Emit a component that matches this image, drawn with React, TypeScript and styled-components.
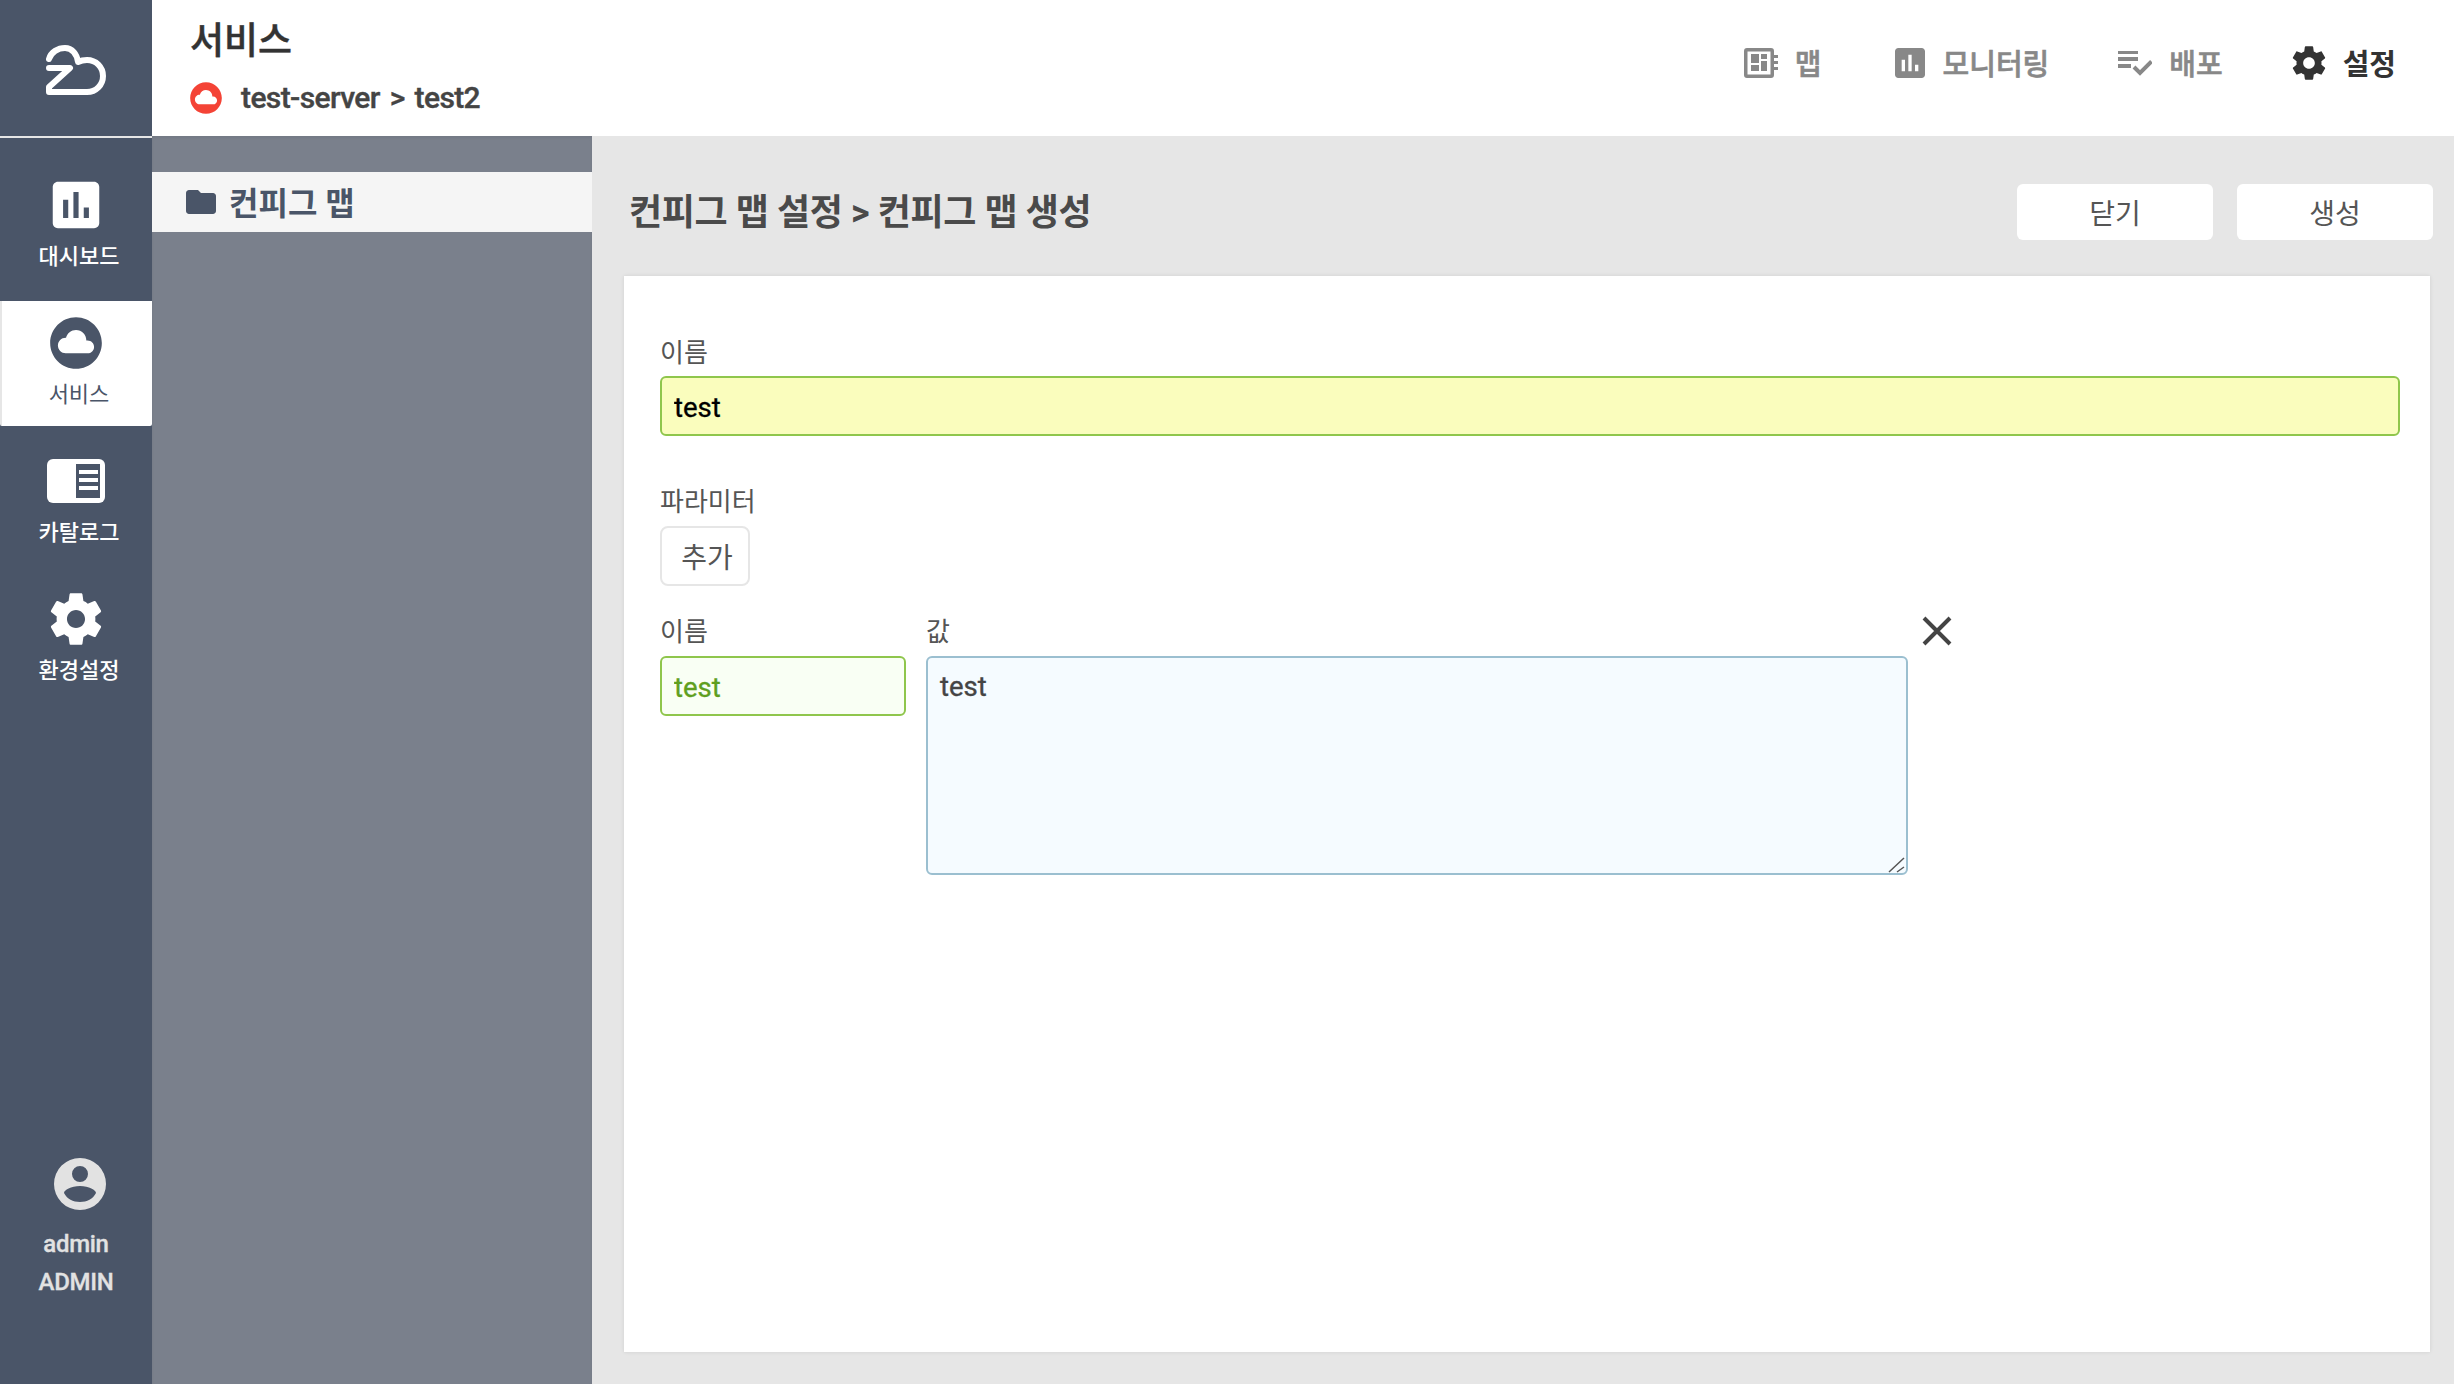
import React from 'react';
import styled, { createGlobalStyle } from 'styled-components';

const Global = createGlobalStyle`
  html, body { margin: 0; padding: 0; height: 100%; overflow: hidden; }
  body { font-family: Roboto, "Noto Sans CJK KR", sans-serif; }
  #root { height: 100%; }
  * { box-sizing: border-box; }
`;

const Shell = styled.div`display: flex; width: 2454px; height: 1384px; background: #e6e6e6;`;
const Sidebar = styled.nav`width: 152px; flex: none; background: #4a5568; display: flex; flex-direction: column;`;
const LogoBox = styled.div`height: 138px; flex: none; border-bottom: 2px solid #e6e6e6; display: flex; align-items: center; justify-content: center; padding-top: 3px;`;
const SideItem = styled.div<{ $active?: boolean; $h: number; $pt: number }>`
  height: ${p => p.$h}px; padding-top: ${p => p.$pt}px; flex: none; display: flex; flex-direction: column; align-items: center;
  font-size: 22px; line-height: 30px; gap: 11px;
  font-weight: ${p => (p.$active ? 400 : 500)};
  color: ${p => (p.$active ? '#4a5568' : '#fff')};
  background: ${p => (p.$active ? '#fff' : 'transparent')};
  ${p => p.$active ? 'margin-top: 3px; border-left: 2px solid #e6e6e6; border-radius: 0 0 2px 2px; padding-right: 2px;' : ''}
`;
const SideIcon = styled.div`height: 52px; display: flex; align-items: center; justify-content: center;`;
const SideLabel = styled.span`padding-left: 6px; white-space: nowrap;`;
const UserBox = styled.div`margin-top: auto; padding-bottom: 83px; display: flex; flex-direction: column; align-items: center; color: #e2e2e2; font-size: 24px; font-weight: 500; line-height: 38px; letter-spacing: -0.3px; -webkit-text-stroke: 0.3px #e2e2e2;`;
const Avatar = styled.svg`display: block; margin: 0 0 15px 8px;`;

const Body = styled.div`flex: 1; min-width: 0; display: flex; flex-direction: column;`;
const Header = styled.header`height: 136px; flex: none; background: #fff; display: flex; justify-content: space-between; align-items: flex-start; padding: 0 58px 0 38px;`;
const HeaderLeft = styled.div`display: flex; flex-direction: column;`;
const PageTitle = styled.h1`margin: 18px 0 0; font-size: 37px; line-height: 48px; font-weight: 500; color: #333; -webkit-text-stroke: 0.4px #333;`;
const Crumb = styled.div`display: flex; align-items: center; gap: 16px; margin-top: 12px; font-size: 30px; font-weight: 500; line-height: 40px; color: #444; letter-spacing: -0.6px; word-spacing: 3px; -webkit-text-stroke: 0.4px #444;`;
const CrumbIcon = styled.svg`display: block; margin-left: -3px;`;
const TopNav = styled.div`display: flex; align-items: center; margin-top: 44px; height: 38px;`;
const TopItem = styled.div<{ $active?: boolean; $gap: number; $ml: number }>`
  display: flex; align-items: center; gap: ${p => p.$gap}px; margin-left: ${p => p.$ml}px;
  font-size: 29px; font-weight: ${p => (p.$active ? 700 : 500)}; color: ${p => (p.$active ? '#333' : '#888')};
  -webkit-text-stroke: ${p => (p.$active ? '0' : '0.6px #888')};
  span { margin-top: -2px; }
`;

const Content = styled.div`flex: 1; min-height: 0; display: flex;`;
const SubPanel = styled.aside`width: 440px; flex: none; background: #7a808c; padding-top: 36px; box-shadow: inset 0 2px 3px rgba(0,0,0,0.06);`;
const SubItem = styled.div`
  height: 60px; background: #f5f5f5; display: flex; align-items: center; gap: 10px; padding-left: 31px;
  font-size: 32px; font-weight: 700; color: #4a5568;
  span { margin-top: -2px; }
`;
const Main = styled.main`flex: 1; min-width: 0; padding: 0 24px 32px 32px; display: flex; flex-direction: column;`;
const TitleRow = styled.div`height: 140px; flex: none; display: flex; align-items: flex-start; justify-content: space-between; margin-right: -3px; padding-top: 48px;`;
const MainTitle = styled.h2`margin: 1px 0 0 5px; font-size: 36px; line-height: 56px; font-weight: 700; color: #4a4a4a; letter-spacing: -0.4px;`;
const Actions = styled.div`display: flex; gap: 24px;`;
const ActionButton = styled.button`width: 196px; height: 56px; border: 0; border-radius: 6px; background: #fff; font: 400 28px Roboto, "Noto Sans CJK KR", sans-serif; color: #555; padding: 0;`;
const Card = styled.section`flex: 1; background: #fff; box-shadow: 0 0 4px rgba(0,0,0,0.1); padding: 59px 30px 0 36px;`;
const FieldLabel = styled.label<{ $mb?: number }>`display: block; font-size: 26px; line-height: 36px; color: #555; margin-bottom: ${p => p.$mb ?? 8}px;`;
const baseField = `
  display: block; border-width: 2px; border-style: solid; border-radius: 6px;
  font: 400 27.5px Roboto, "Noto Sans CJK KR", sans-serif; outline: none;
`;
const WideInput = styled.input`${baseField} width: 100%; height: 60px; padding: 2px 12px 0; background: #fafdbd; border-color: #8fc64c; color: #000; -webkit-text-stroke: 0.35px #000;`;
const Section = styled.div`margin-top: 48px;`;
const AddButton = styled.button`display: block; width: 90px; height: 60px; border: 2px solid #e6e6e6; border-radius: 8px; background: #fff; font: 400 28px Roboto, "Noto Sans CJK KR", sans-serif; color: #555; padding: 0 0 0 4px; margin-top: -2px;`;
const ParamRow = styled.div`display: flex; align-items: flex-start; gap: 20px; margin-top: 28px;`;
const ParamCol = styled.div<{ $w: number }>`width: ${p => p.$w}px; flex: none;`;
const NameInput = styled.input`${baseField} width: 100%; height: 60px; padding: 2px 12px 0; background: #f9fff4; border-color: #8fc64c; color: #5f9f1f; -webkit-text-stroke: 0.35px #5f9f1f;`;
const AreaWrap = styled.div`position: relative;`;
const ValueArea = styled.textarea`${baseField} width: 100%; height: 219px; background: #f5fbff; border-color: #9bbfd0; color: #444; padding: 13px 12px 0; line-height: 32px; resize: none; -webkit-text-stroke: 0.35px #444;`;
const Grip = styled.svg`position: absolute; right: 0; bottom: 1px; display: block;`;
const RemoveButton = styled.button`border: 0; background: none; padding: 0; margin: 2px 0 0 -6px; display: block;`;

const gear = 'M19.43 12.98c.04-.32.07-.64.07-.98s-.03-.66-.07-.98l2.11-1.65c.19-.15.24-.42.12-.64l-2-3.46c-.12-.22-.39-.3-.61-.22l-2.49 1c-.52-.4-1.08-.73-1.69-.98l-.38-2.65C14.46 2.18 14.25 2 14 2h-4c-.25 0-.46.18-.49.42l-.38 2.65c-.61.25-1.17.59-1.69.98l-2.49-1c-.23-.09-.49 0-.61.22l-2 3.46c-.13.22-.07.49.12.64l2.11 1.65c-.04.32-.07.65-.07.98s.03.66.07.98l-2.11 1.65c-.19.15-.24.42-.12.64l2 3.46c.12.22.39.3.61.22l2.49-1c.52.4 1.08.73 1.69.98l.38 2.65c.03.24.24.42.49.42h4c.25 0 .46-.18.49-.42l.38-2.65c.61-.25 1.17-.59 1.69-.98l2.49 1c.23.09.49 0 .61-.22l2-3.46c.12-.22.07-.49-.12-.64l-2.11-1.65zM12 15.5c-1.93 0-3.5-1.57-3.5-3.5s1.57-3.5 3.5-3.5 3.5 1.57 3.5 3.5-1.57 3.5-3.5 3.5z';
const cloudCircle = 'M12 2C6.47 2 2 6.47 2 12s4.47 10 10 10 10-4.47 10-10S17.53 2 12 2zm4.5 14H8c-1.66 0-3-1.34-3-3s1.34-3 3-3l.14.01C8.58 8.28 10.13 7 12 7c2.21 0 4 1.79 4 4h.5c1.38 0 2.5 1.12 2.5 2.5S17.88 16 16.5 16z';
const assessment = 'M19 3H5c-1.1 0-2 .9-2 2v14c0 1.1.9 2 2 2h14c1.1 0 2-.9 2-2V5c0-1.1-.9-2-2-2zM9 17H7v-7h2v7zm4 0h-2V7h2v10zm4 0h-2v-4h2v4z';
const folder = 'M10 4H4c-1.1 0-1.99.9-1.99 2L2 18c0 1.1.9 2 2 2h16c1.1 0 2-.9 2-2V8c0-1.1-.9-2-2-2h-8l-2-2z';

const Logo = () => (
  <svg width="60" height="50" viewBox="46 44 60 50" fill="none" stroke="#fff" strokeWidth="6" strokeLinecap="round" strokeLinejoin="round">
    <path d="M49 58C51 51 58 47 65 47C72 47 77 53 78 61C81 59.500 84 59 87 59C96 59 103 66 103 75C103 84 96 91 87 91L49 91L49 86L70 67L49 67" />
  </svg>
);

const CatalogIcon = () => (
  <svg width="58" height="44" viewBox="0 0 58 44">
    <rect x="0" y="0" width="58" height="44" rx="6" fill="#fff" />
    <rect x="29" y="5" width="24" height="34" fill="#4a5568" />
    <path d="M32 11h19v4H32zM32 19h19v4H32zM32 27h19v4H32z" fill="#fff" />
  </svg>
);

const MapIcon = () => (
  <svg width="34" height="30" viewBox="0 0 34 30" fill="#888">
    <path fillRule="evenodd" d="M3 0h24a3 3 0 0 1 3 3v24a3 3 0 0 1-3 3H3a3 3 0 0 1-3-3V3a3 3 0 0 1 3-3zM3.500 3.500v23h23v-23z" />
    <path d="M7 6h8v9H7zM17 6h6v5H17zM7 17h8v6H7zM17 13h6v10H17zM30 7h4v3h-4zM30 13h4v3h-4zM30 19h4v3h-4z" />
  </svg>
);

const DeployIcon = () => (
  <svg width="35" height="26" viewBox="0 0 35 26" fill="none" stroke="#888">
    <path strokeWidth="3" d="M1 2.500h20" />
    <path strokeWidth="4" d="M1 9h20M1 16h13" />
    <path strokeWidth="4" d="M17 17l6 6L34.500 11.500" />
  </svg>
);

export default function App() {
  return (
    <>
      <Global />
      <Shell>
        <Sidebar>
          <LogoBox><Logo /></LogoBox>
          <SideItem $h={160} $pt={41}>
            <SideIcon><svg width="62" height="62" viewBox="0 0 24 24" fill="#fff"><path d={assessment} /></svg></SideIcon>
            <SideLabel>대시보드</SideLabel>
          </SideItem>
          <SideItem $active $h={125} $pt={16}>
            <SideIcon><svg width="62" height="62" viewBox="0 0 24 24" fill="#4a5568"><path d={cloudCircle} /></svg></SideIcon>
            <SideLabel>서비스</SideLabel>
          </SideItem>
          <SideItem $h={137} $pt={29}>
            <SideIcon><CatalogIcon /></SideIcon>
            <SideLabel>카탈로그</SideLabel>
          </SideItem>
          <SideItem $h={137} $pt={30}>
            <SideIcon><svg width="62" height="62" viewBox="0 0 24 24" fill="#fff"><path d={gear} /></svg></SideIcon>
            <SideLabel>환경설정</SideLabel>
          </SideItem>
          <UserBox>
            <Avatar width="52" height="52" viewBox="0 0 52 52">
              <path fill="#e2e2e2" fillRule="evenodd" d="M26 0a26 26 0 1 1 0 52a26 26 0 1 1 0-52zM26 8a8 8 0 1 0 0 16a8 8 0 1 0 0-16zM26 28c-9 0-16 4-16 7c3 6 9 9 16 9s13-3 16-9c0-3-7-7-16-7z" />
            </Avatar>
            <span>admin</span>
            <span>ADMIN</span>
          </UserBox>
        </Sidebar>
        <Body>
          <Header>
            <HeaderLeft>
              <PageTitle>서비스</PageTitle>
              <Crumb>
                <CrumbIcon width="38" height="38" viewBox="0 0 24 24" fill="#f44336"><path d={cloudCircle} /></CrumbIcon>
                <span>test-server &gt; test2</span>
              </Crumb>
            </HeaderLeft>
            <TopNav>
              <TopItem $gap={17} $ml={0}><MapIcon /><span>맵</span></TopItem>
              <TopItem $gap={18} $ml={73}><svg width="30" height="30" viewBox="3 3 18 18" fill="#888"><path d={assessment} /></svg><span>모니터링</span></TopItem>
              <TopItem $gap={17} $ml={68}><DeployIcon /><span>배포</span></TopItem>
              <TopItem $active $gap={14} $ml={66}><svg width="40" height="40" viewBox="0 0 24 24" fill="#333"><path d={gear} /></svg><span>설정</span></TopItem>
            </TopNav>
          </Header>
          <Content>
            <SubPanel>
              <SubItem>
                <svg width="36" height="36" viewBox="0 0 24 24" fill="#4a5568"><path d={folder} /></svg>
                <span>컨피그 맵</span>
              </SubItem>
            </SubPanel>
            <Main>
              <TitleRow>
                <MainTitle>컨피그 맵 설정 &gt; 컨피그 맵 생성</MainTitle>
                <Actions>
                  <ActionButton>닫기</ActionButton>
                  <ActionButton>생성</ActionButton>
                </Actions>
              </TitleRow>
              <Card>
                <FieldLabel $mb={5}>이름</FieldLabel>
                <WideInput defaultValue="test" />
                <Section>
                  <FieldLabel>파라미터</FieldLabel>
                  <AddButton>추가</AddButton>
                </Section>
                <ParamRow>
                  <ParamCol $w={246}>
                    <FieldLabel $mb={6}>이름</FieldLabel>
                    <NameInput defaultValue="test" />
                  </ParamCol>
                  <ParamCol $w={982}>
                    <FieldLabel $mb={6}>값</FieldLabel>
                    <AreaWrap>
                      <ValueArea defaultValue="test" />
                      <Grip width="20" height="18" viewBox="0 0 20 18" stroke="#555" strokeWidth="1.5" fill="none">
                        <path d="M1 16L16 2M9 16L16 11" />
                      </Grip>
                    </AreaWrap>
                  </ParamCol>
                  <RemoveButton aria-label="삭제">
                    <svg width="30" height="30" viewBox="0 0 30 30" stroke="#444" strokeWidth="4" fill="none"><path d="M2 2L28 28M28 2L2 28" /></svg>
                  </RemoveButton>
                </ParamRow>
              </Card>
            </Main>
          </Content>
        </Body>
      </Shell>
    </>
  );
}
